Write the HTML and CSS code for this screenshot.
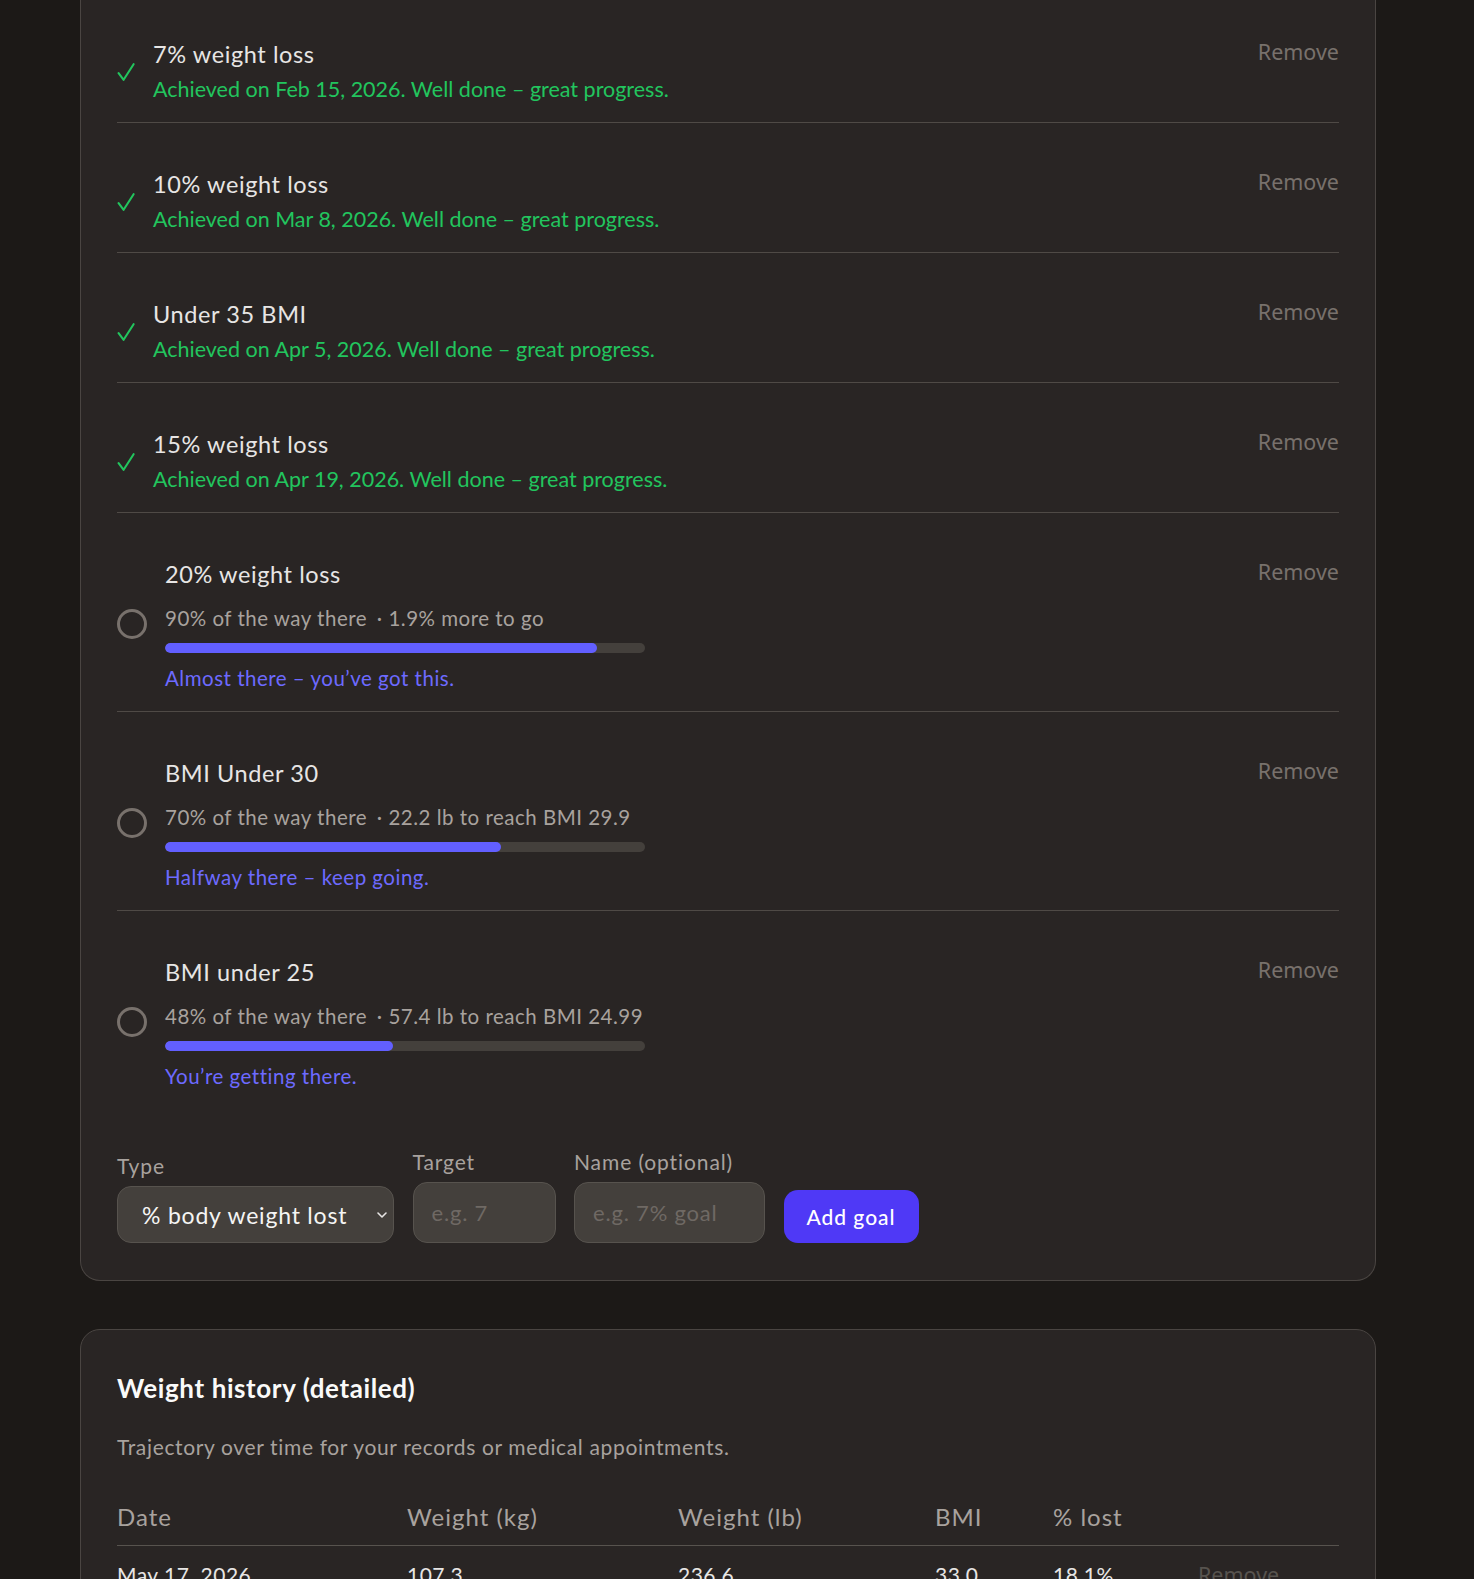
FILE: index.html
```html
<!DOCTYPE html>
<html lang="en">
<head>
<meta charset="utf-8">
<title>Goals</title>
<link rel="stylesheet" href="styles.css">
</head>
<body>
<main class="page">
  <section class="card card-goals">
    <ul class="goals">
      <li class="goal done">
        <svg class="check" width="18" height="18" viewBox="0 0 18 18"><path d="M1.6 10.2 L6.6 16.8 L16.6 1.2" fill="none" stroke="#22c55e" stroke-width="2.1" stroke-linecap="round" stroke-linejoin="round"/></svg>
        <div class="goal-body">
          <div class="goal-title">7% weight loss</div>
          <div class="goal-achieved">Achieved on Feb 15, 2026. Well done – great progress.</div>
        </div>
        <button class="remove">Remove</button>
      </li>
      <li class="goal done">
        <svg class="check" width="18" height="18" viewBox="0 0 18 18"><path d="M1.6 10.2 L6.6 16.8 L16.6 1.2" fill="none" stroke="#22c55e" stroke-width="2.1" stroke-linecap="round" stroke-linejoin="round"/></svg>
        <div class="goal-body">
          <div class="goal-title">10% weight loss</div>
          <div class="goal-achieved">Achieved on Mar 8, 2026. Well done – great progress.</div>
        </div>
        <button class="remove">Remove</button>
      </li>
      <li class="goal done">
        <svg class="check" width="18" height="18" viewBox="0 0 18 18"><path d="M1.6 10.2 L6.6 16.8 L16.6 1.2" fill="none" stroke="#22c55e" stroke-width="2.1" stroke-linecap="round" stroke-linejoin="round"/></svg>
        <div class="goal-body">
          <div class="goal-title">Under 35 BMI</div>
          <div class="goal-achieved">Achieved on Apr 5, 2026. Well done – great progress.</div>
        </div>
        <button class="remove">Remove</button>
      </li>
      <li class="goal done">
        <svg class="check" width="18" height="18" viewBox="0 0 18 18"><path d="M1.6 10.2 L6.6 16.8 L16.6 1.2" fill="none" stroke="#22c55e" stroke-width="2.1" stroke-linecap="round" stroke-linejoin="round"/></svg>
        <div class="goal-body">
          <div class="goal-title">15% weight loss</div>
          <div class="goal-achieved">Achieved on Apr 19, 2026. Well done – great progress.</div>
        </div>
        <button class="remove">Remove</button>
      </li>
      <li class="goal pending">
        <span class="ring"></span>
        <div class="goal-body">
          <div class="goal-title">20% weight loss</div>
          <div class="goal-progress">90% of the way there <span class="sep">· 1.9% more to go</span></div>
          <div class="bar"><div class="bar-fill" style="width: 90%"></div></div>
          <div class="goal-msg">Almost there – you’ve got this.</div>
        </div>
        <button class="remove">Remove</button>
      </li>
      <li class="goal pending">
        <span class="ring"></span>
        <div class="goal-body">
          <div class="goal-title">BMI Under 30</div>
          <div class="goal-progress">70% of the way there <span class="sep">· 22.2 lb to reach BMI 29.9</span></div>
          <div class="bar"><div class="bar-fill" style="width: 70%"></div></div>
          <div class="goal-msg">Halfway there – keep going.</div>
        </div>
        <button class="remove">Remove</button>
      </li>
      <li class="goal pending last">
        <span class="ring"></span>
        <div class="goal-body">
          <div class="goal-title">BMI under 25</div>
          <div class="goal-progress">48% of the way there <span class="sep">· 57.4 lb to reach BMI 24.99</span></div>
          <div class="bar"><div class="bar-fill" style="width: 47.5%"></div></div>
          <div class="goal-msg">You’re getting there.</div>
        </div>
        <button class="remove">Remove</button>
      </li>
    </ul>

    <form class="goal-form">
      <label class="field field-type">
        <span class="field-label">Type</span>
        <span class="select-wrap">
          <select class="select">
            <option>% body weight lost</option>
          </select>
          <svg class="chev" width="14" height="10" viewBox="0 0 14 10"><path d="M3 3 L7 7 L11 3" fill="none" stroke="#e7e5e4" stroke-width="1.6" stroke-linecap="round" stroke-linejoin="round"/></svg>
        </span>
      </label>
      <label class="field field-target">
        <span class="field-label">Target</span>
        <input class="input input-target" type="text" placeholder="e.g. 7">
      </label>
      <label class="field field-name">
        <span class="field-label">Name (optional)</span>
        <input class="input input-name" type="text" placeholder="e.g. 7% goal">
      </label>
      <button type="button" class="add-btn">Add goal</button>
    </form>
  </section>

  <section class="card card-history">
    <h2 class="history-title">Weight history (detailed)</h2>
    <p class="history-sub">Trajectory over time for your records or medical appointments.</p>
    <table class="history">
      <thead>
        <tr>
          <th class="c-date">Date</th>
          <th class="c-kg">Weight (kg)</th>
          <th class="c-lb">Weight (lb)</th>
          <th class="c-bmi">BMI</th>
          <th class="c-lost">% lost</th>
          <th class="c-act"></th>
        </tr>
      </thead>
      <tbody>
        <tr>
          <td>May 17, 2026</td>
          <td>107.3</td>
          <td>236.6</td>
          <td>33.0</td>
          <td>18.1%</td>
          <td><button class="remove remove-row">Remove</button></td>
        </tr>
      </tbody>
    </table>
  </section>
</main>
</body>
</html>
```
FILE: styles.css
```css
* { box-sizing: border-box; }

html, body {
  margin: 0;
  padding: 0;
  background: #1c1917;
  height: 1579px;
  overflow: hidden;
}

body {
  font-family: "Lato", "Noto Sans", sans-serif;
  color: #e7e5e4;
}

.page {
  padding-left: 80px;
}

.card {
  width: 1296px;
  background: #292524;
  border: 1px solid #4a4542;
  border-radius: 20px;
  padding: 0 36px 37px;
}

.card-goals {
  border-top: none;
  border-top-left-radius: 0;
  border-top-right-radius: 0;
}

.goals {
  list-style: none;
  margin: 0;
  padding: 0;
}

.goal {
  display: flex;
  align-items: center;
  padding: 46px 0 19px;
  border-bottom: 1px solid #4f4a46;
}

.goal:first-child {
  padding-top: 39px;
}

.goal.last {
  border-bottom: none;
}

.goal-body {
  flex: 1;
  display: flex;
  flex-direction: column;
}

.check {
  flex: none;
  display: block;
  margin-right: 18px;
  margin-top: 2px;
}

.ring {
  width: 30px;
  height: 30px;
  border: 3px solid #78716c;
  border-radius: 50%;
  margin-right: 18px;
  margin-top: -4px;
  flex: none;
}

.goal-title {
  font-size: 23.5px;
  letter-spacing: 0.6px;
  line-height: 30px;
  color: #e7e5e4;
}

.goal-achieved {
  margin-top: 6px;
  font-size: 21.5px;
  line-height: 28px;
  color: #22c55e;
}

.goal-progress {
  margin-top: 15px;
  font-size: 20.5px;
  letter-spacing: 0.5px;
  line-height: 28px;
  color: #a8a29e;
}

.sep {
  margin-left: 4px;
}

.bar {
  margin-top: 11px;
  width: 480px;
  height: 10px;
  background: #44403c;
  border-radius: 5px;
  overflow: hidden;
}

.bar-fill {
  height: 100%;
  background: #625fff;
  border-radius: 5px;
}

.goal-msg {
  margin-top: 11px;
  font-size: 20.5px;
  letter-spacing: 0.5px;
  line-height: 28px;
  color: #6d6aff;
}

.remove {
  align-self: flex-start;
  background: none;
  border: none;
  padding: 0;
  margin-top: -1px;
  font-family: "Noto Sans", "Open Sans", sans-serif;
  font-size: 21.5px;
  line-height: 28px;
  color: #78716c;
  cursor: pointer;
}

.goal-form {
  display: flex;
  align-items: flex-end;
  gap: 18.5px;
  margin-top: 41px;
}

.field {
  display: flex;
  flex-direction: column;
  gap: 8px;
}

.field-label {
  font-size: 21px;
  letter-spacing: 0.9px;
  line-height: 24px;
  color: #a8a29e;
}

.select-wrap {
  position: relative;
  display: block;
}

.select {
  appearance: none;
  -webkit-appearance: none;
  width: 277px;
  height: 57px;
  padding: 0 40px 0 24px;
  background: #44403c;
  border: 1px solid #57534e;
  border-radius: 14px;
  font-family: "Lato", sans-serif;
  font-size: 23px;
  letter-spacing: 0.8px;
  color: #f5f5f4;
}

.chev {
  position: absolute;
  right: 5px;
  top: 24px;
}

.input {
  height: 61px;
  padding: 0 18px;
  background: #44403c;
  border: 1px solid #57534e;
  border-radius: 14px;
  font-family: "Lato", sans-serif;
  font-size: 22px;
  letter-spacing: 0.8px;
  color: #f5f5f4;
}

.input::placeholder {
  color: #6f6964;
}

.input-target { width: 143px; }
.input-name { width: 191px; }

.add-btn {
  height: 53px;
  width: 135px;
  background: #4f39f6;
  border: none;
  border-radius: 14px;
  color: #ffffff;
  font-family: "Lato", sans-serif;
  font-size: 21px;
  letter-spacing: 1px;
  font-weight: 500;
}

.card-history {
  margin-top: 48px;
  padding-top: 41px;
}

.history-title {
  margin: 0;
  font-size: 26px;
  letter-spacing: 0.6px;
  line-height: 34px;
  font-weight: 700;
  color: #fafaf9;
}

.history-sub {
  margin: 28px 0 0;
  font-size: 21px;
  letter-spacing: 0.65px;
  line-height: 28px;
  color: #a8a29e;
}

.history {
  width: 100%;
  margin-top: 41px;
  border-collapse: collapse;
}

.history th {
  text-align: left;
  font-weight: 400;
  font-size: 24px;
  letter-spacing: 1px;
  line-height: 30px;
  color: #a8a29e;
  padding: 0 0 13px;
  border-bottom: 1px solid #57534e;
}

.history td {
  font-size: 21px;
  letter-spacing: 0.5px;
  line-height: 28px;
  color: #e7e5e4;
  padding: 15px 0;
}

.c-date { width: 290px; }
.c-kg { width: 271px; }
.c-lb { width: 257px; }
.c-bmi { width: 118px; }
.c-lost { width: 145px; }

.remove-row {
  margin-top: 0;
  color: #57534e;
}
```
